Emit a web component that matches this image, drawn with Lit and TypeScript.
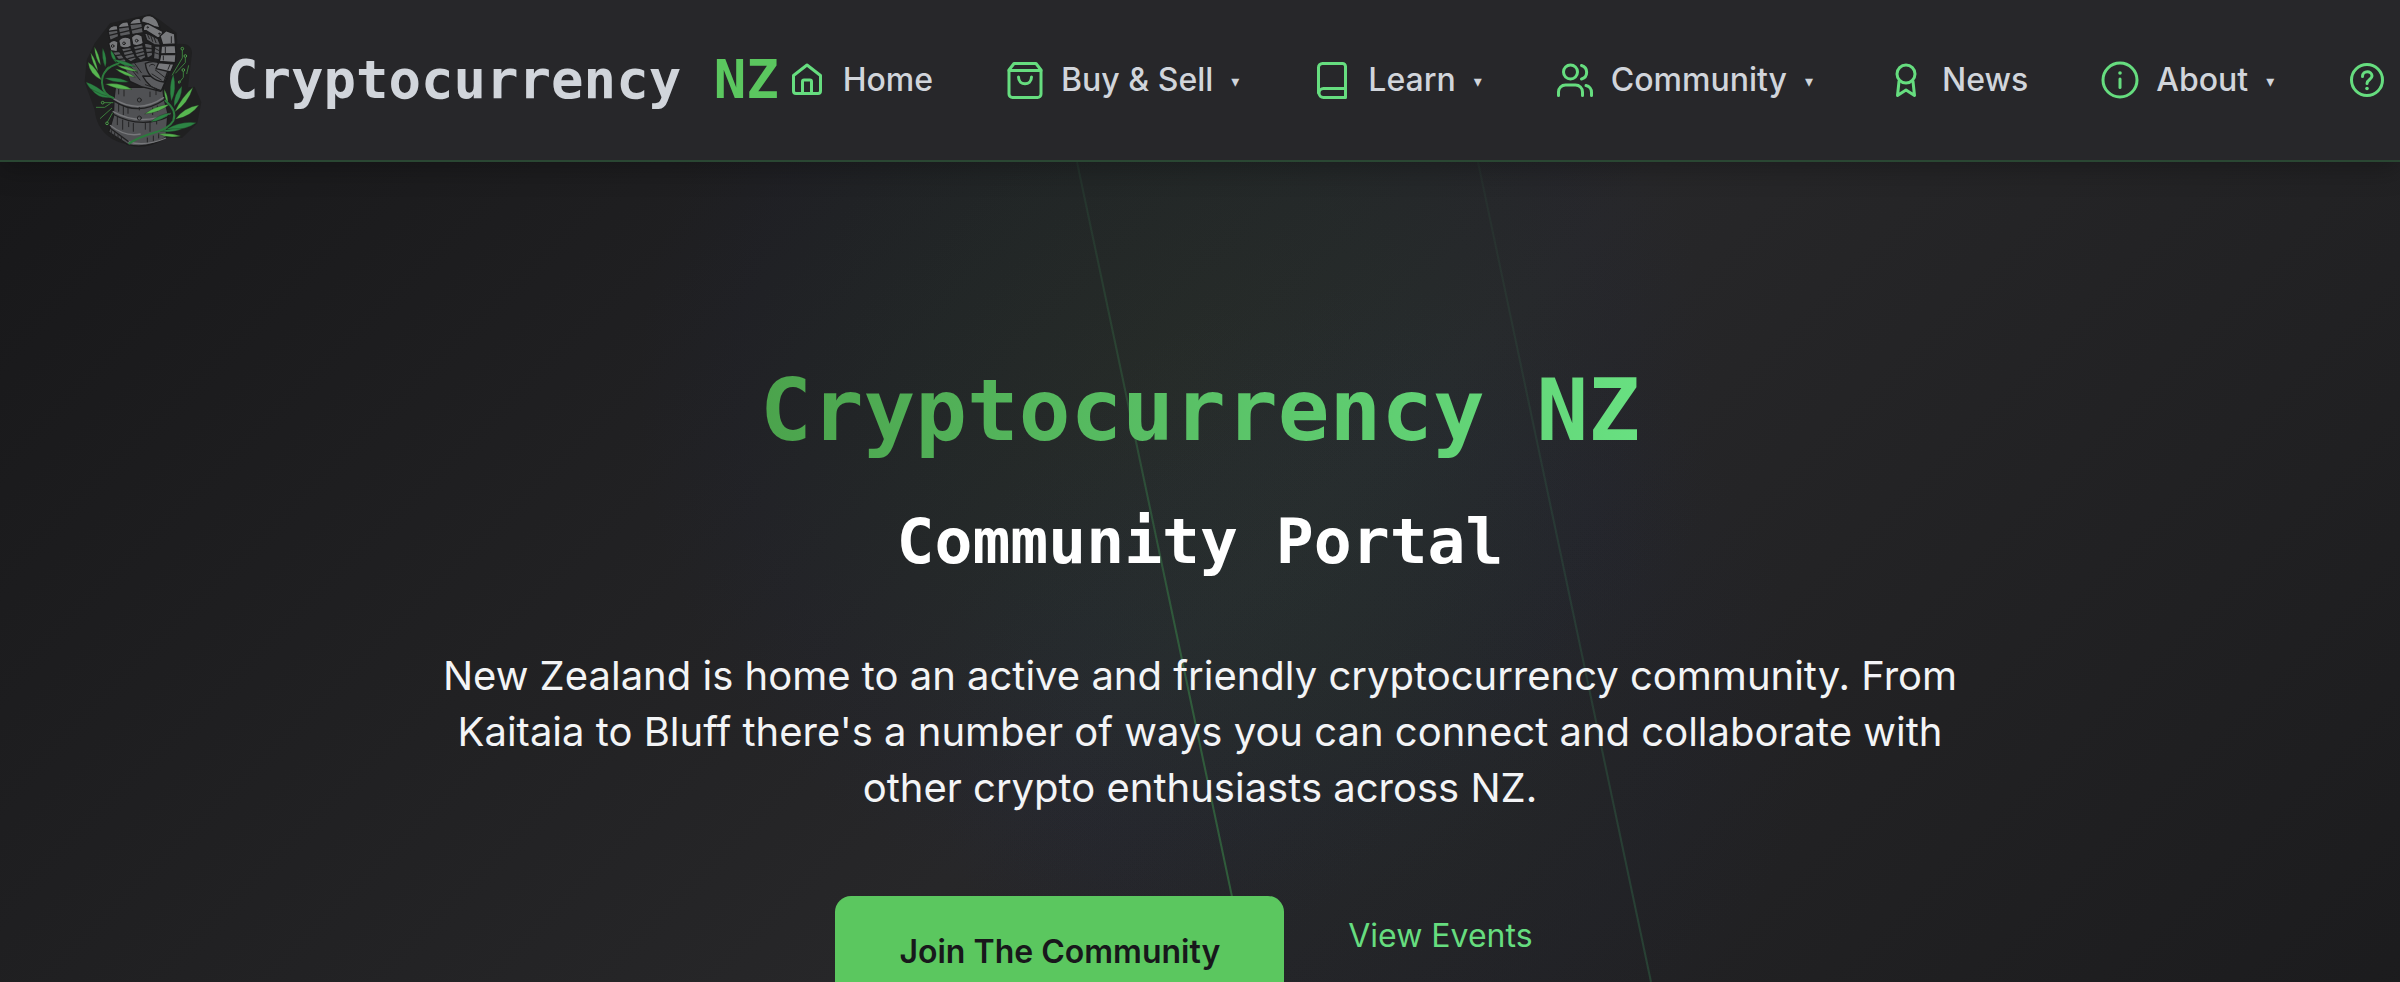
import { LitElement, html, css, svg, nothing } from "lit";
import { customElement, property } from "lit/decorators.js";

const ICONS: Record<string, unknown> = {
  home: svg`<path d="M20 5 6.500 15.500V31a2.500 2.500 0 0 0 2.500 2.500h22a2.500 2.500 0 0 0 2.500-2.500V15.500Z"/><path d="M15.500 33V21.500a1.500 1.500 0 0 1 1.500-1.500h6a1.500 1.500 0 0 1 1.500 1.500V33"/>`,
  bag: svg`<path d="M9 3.500h22l5 6.500v24a3.500 3.500 0 0 1-3.500 3.500h-25A3.500 3.500 0 0 1 4 34V10Z"/><path d="M4 10.500h32M13.500 17c0 9 13 9 13 0"/>`,
  book: svg`<path d="M6.500 33V7.500a4 4 0 0 1 4-4h20a3 3 0 0 1 3 3v31h-22a4.500 4.500 0 0 1 0-9h22"/>`,
  users: svg`<circle cx="15.500" cy="12" r="7"/><path d="M3.500 35.500V32a7 7 0 0 1 7-7h10a7 7 0 0 1 7 7v3.500M26.500 5.500a7 7 0 0 1 0 13.500M31 25.500a7 7 0 0 1 5.500 7v3"/>`,
  award: svg`<circle cx="20" cy="14" r="9"/><path d="M13 21.500 11.500 35.500 20 30l8.500 5.500L27 21.500"/>`,
  info: svg`<circle cx="20" cy="20" r="17"/><path d="M20 19v8.500"/><circle class="dot" cx="20" cy="13" r="1.800"/>`,
  help: svg`<circle cx="20" cy="20" r="15.500"/><path d="M15.500 16.500c0-6.500 9.500-6 9.500-.5 0 3.500-5 3.500-5 7.500"/><circle class="dot" cx="20" cy="28.500" r="1.800"/>`,
};

const leaves = (d: string[], cls: string) => d.map((p) => svg`<path class=${cls} d=${p} />`);

const BRIGHT = [
  "M92 158Q96 190 114 214Q110 182 92 158Z",
  "M84 186Q88 222 124 240Q112 206 84 186Z",
  "M103 140Q106 178 122 196Q119 164 103 140Z",
  "M170 196Q200 196 234 214Q196 214 170 196Z",
  "M166 206Q200 212 226 232Q190 228 166 206Z",
  "M136 252Q180 246 216 268Q176 272 136 252Z",
  "M399 262Q366 290 344 336Q384 312 399 262Z",
  "M417 315Q372 322 346 358Q392 350 417 315Z",
  "M254 342Q300 338 330 312Q284 318 254 342Z",
  "M294 402Q330 398 362 408Q326 416 294 402Z",
  "M312 268Q314 300 324 308Q324 284 312 268Z",
  "M148 198Q140 214 128 228Q134 208 148 198Z",
];
const DEEP = [
  "M128 144Q124 176 136 202Q144 174 128 144Z",
  "M152 150Q150 174 170 190Q168 166 152 150Z",
  "M78 246Q94 284 150 292Q112 256 78 246Z",
  "M94 268Q116 300 158 292Q124 286 94 268Z",
  "M160 178Q200 182 226 200Q186 200 160 178Z",
  "M134 234Q180 230 206 246Q160 250 134 234Z",
  "M340 222Q324 262 334 304Q352 270 340 222Z",
  "M366 258Q340 282 342 320Q366 296 366 258Z",
  "M409 368Q362 362 318 388Q372 394 409 368Z",
  "M272 366Q306 362 334 338Q296 342 272 366Z",
  "M300 394Q336 382 366 388Q334 400 300 394Z",
];

@customElement("fist-logo")
export class FistLogo extends LitElement {
  static styles = css`
    :host { display: block; flex: none; }
    svg { display: block; width: 128px; height: 140px; }
    .back { fill: #202021; }
    .plate { fill: #78797c; stroke: #1d1d1e; stroke-width: 4; stroke-linejoin: round; }
    .mid { fill: #5b5c5f; stroke: #1d1d1e; stroke-width: 4; stroke-linejoin: round; }
    .arm { fill: #505154; stroke: #1d1d1e; stroke-width: 4; stroke-linejoin: round; }
    .ink { fill: none; stroke: #1f1f20; stroke-width: 4; stroke-linecap: round; }
    .fine { fill: none; stroke: #242425; stroke-width: 3; stroke-linecap: round; }
    .rim { fill: none; stroke: #77787b; stroke-width: 4; }
    .bright { fill: #57b650; stroke: #1d2a1e; stroke-width: 1; }
    .deep { fill: #2c8444; stroke: #1d2a1e; stroke-width: 1; }
    .vine { fill: none; stroke: #2c7a3d; stroke-width: 6; stroke-linecap: round; }
    .wire { fill: none; stroke: #3c7d3d; stroke-width: 3; }
    .node { fill: #202021; stroke: #4a9a48; stroke-width: 3; }
  `;

  render() {
    return html`<svg viewBox="60 30 384 420" role="img" aria-label="Cryptocurrency NZ logo">
      <path class="back" d="M150 70 270 42 300 60 350 98 352 132Q396 128 396 160L384 262 404 260 424 306 412 370 366 414 318 414Q240 452 170 424Q110 396 104 330L74 246 80 180 104 130Z"/>
      <path class="arm" d="M166 262 308 262 312 296 324 340 318 412Q262 448 204 434L146 396 160 350 162 296Z"/>
      <path class="rim" d="M160 296Q236 344 312 292M158 334Q240 380 332 340M150 376Q196 412 242 402M206 426Q258 440 318 414"/>
      <path class="ink" d="M164 304Q236 350 312 300M158 342Q240 388 326 350M150 384 204 424"/>
      <path class="fine" d="M176 312v22M190 318v26M204 324v16M292 318v16M278 324v20M172 352v22M188 360v28M220 370v24M206 366v14M256 368v20M270 364v30M290 358v14M176 282v-14M192 288v-18M288 284v-16M270 290v-14M154 392v14M164 398v14M174 404v14M184 410v14M238 322v8M262 414v12M280 408v14M296 402v12"/>
      <circle class="fine" cx="238" cy="300" r="6"/><circle class="fine" cx="238" cy="354" r="6"/>
      <path class="arm" d="M190 194 260 180 330 194 322 232 302 274 244 260 210 244Z"/>
      <path class="mid" d="M248 228 322 230 304 272Q268 266 248 228Z"/>
      <path class="mid" d="M256 190Q290 174 326 206L312 246Q262 240 256 190Z"/>
      <path class="fine" d="M268 198q8-10 16-2M286 210l28 22M276 222l28 18M256 254l34 12M216 210l24 30M206 196l28 24M224 190l20 28"/>
      <path class="mid" d="M144 94 172 82 176 110 150 122ZM174 82 206 70 212 104 180 110ZM208 70 244 60 250 98 216 104Z"/>
      <path class="ink" d="M148 106 248 82"/>
      <path class="plate" d="M144 94Q146 76 172 76L174 90ZM174 84Q178 64 204 66L208 80ZM208 74Q214 54 240 54L244 70Z"/>
      <path class="plate" d="M244 66Q244 46 268 46Q292 50 300 84L282 80 260 70Z"/>
      <path class="plate" d="M146 130Q160 114 174 126L172 156 152 152ZM176 122Q190 104 212 116L214 138Q196 150 180 140ZM214 112Q228 94 246 108L250 130Q232 142 218 134Z"/>
      <path class="mid" d="M156 156 178 154 200 184 186 192ZM184 146 212 142 230 176 212 186 196 174ZM220 140 248 134 258 172 242 182 228 168ZM252 128 276 134 278 166 262 176Z"/>
      <path class="ink" d="M162 168 186 164M170 180 194 176M190 156 216 150M196 166 222 160M204 176 228 170M224 150 250 144M230 160 254 154M234 170 256 164M256 144 276 146M258 158 278 156"/>
      <path class="plate" d="M250 92Q248 70 266 72L308 94Q308 112 294 114L258 92Z"/>
      <path class="mid" d="M252 96 294 116 302 136 282 134 260 120Z"/>
      <path class="fine" d="M262 102l6 14M272 106l6 18M282 112l6 16"/>
      <path class="plate" d="M300 108 318 92 344 102 346 132 308 134Z"/>
      <path class="plate" d="M304 138 346 136 348 160 302 162ZM302 164 348 164 346 188 298 184ZM296 188 342 192 332 216 288 206Z"/>
      <path class="mid" d="M284 138 300 138 298 180 280 176Z"/>
      <path class="fine" d="M286 146l12 6M284 158l12 4M316 142v16M310 168v12M330 194l-6 14M334 110v18"/>
      <circle class="fine" cx="263" cy="82" r="2"/><circle class="fine" cx="298" cy="101" r="2"/>
      <circle class="fine" cx="158" cy="138" r="4"/><circle class="fine" cx="192" cy="130" r="4"/><circle class="fine" cx="230" cy="122" r="4"/>
      <path class="wire" d="M367 150V174L336 226M376 172V188L346 220M370 214V232L356 250M386 196 380 222M108 322H134L152 310M128 308H160M120 356 156 324M140 370 158 338"/>
      <circle class="node" cx="367" cy="146" r="4"/><circle class="node" cx="376" cy="168" r="4"/><circle class="node" cx="370" cy="210" r="4"/><circle class="node" cx="128" cy="308" r="4"/><circle class="node" cx="141" cy="370" r="4"/><circle class="node" cx="358" cy="246" r="3"/>
      ${leaves(DEEP, "deep")}${leaves(BRIGHT, "bright")}
      <path class="vine" d="M176 190Q124 206 126 248Q128 284 160 294M316 302Q352 330 340 362Q326 386 282 398Q234 412 208 430"/>
    </svg>`;
  }
}

@customElement("nav-item")
export class NavItem extends LitElement {
  @property() icon = "";
  @property() label = "";
  @property({ type: Boolean }) menu = false;

  static styles = css`
    :host { display: block; flex: none; }
    .item {
      display: flex; align-items: center; gap: 16px; height: 48px; padding: 0; border: 0; background: none;
      color: #d1d5db; font: 500 32px/48px Inter, sans-serif; text-decoration: none; white-space: nowrap; cursor: pointer;
    }
    .icon {
      display: block; width: 40px; height: 40px; fill: none; stroke: #66dd7f; stroke-width: 3;
      stroke-linecap: round; stroke-linejoin: round;
    }
    .dot { fill: #66dd7f; stroke: none; }
    .caret { font: 16px/44px "DejaVu Sans", sans-serif; padding: 4px 1px 0 2px; }
  `;

  render() {
    const body = html`<svg class="icon" viewBox="0 0 40 40" aria-hidden="true">${ICONS[this.icon]}</svg>
      ${this.label ? html`<span>${this.label}</span>` : nothing}
      ${this.menu ? html`<span class="caret" aria-hidden="true">▾</span>` : nothing}`;
    return this.menu
      ? html`<button class="item" type="button" aria-haspopup="true">${body}</button>`
      : html`<a class="item" href="#" aria-label=${this.label || "Help"}>${body}</a>`;
  }
}

@customElement("app-root")
export class AppRoot extends LitElement {
  static styles = css`
    :host {
      display: flex; flex-direction: column; height: 100vh; overflow: hidden;
      background: #1a1a1c; color: #f3f4f6; font-family: Inter, sans-serif;
    }
    .header {
      position: relative; z-index: 1; display: flex; align-items: center; flex: none; gap: 8px;
      padding: 10px 0 10px 80px; background: #27272a; border-bottom: 2px solid #2a4733;
      box-shadow: 0 8px 24px rgba(0, 0, 0, 0.25);
    }
    .brand {
      display: flex; align-items: center; gap: 18px; flex: none; color: #d1d5db; text-decoration: none;
      font: 700 54px/64px "DejaVu Sans Mono", monospace; white-space: nowrap;
    }
    .accent { color: #5bc75f; }
    .nav { display: flex; align-items: center; gap: 72px; flex: 1; min-width: 0; }
    .hero {
      position: relative; flex: 1; display: flex; flex-direction: column; align-items: center;
      padding: 200px 48px 80px; text-align: center;
      background:
        radial-gradient(circle at 49% 230px, rgba(76, 175, 80, 0.05) 0, rgba(40, 130, 100, 0.05) 240px, rgba(30, 50, 110, 0.04) 440px, transparent 540px),
        radial-gradient(circle at 57% 560px, rgba(40, 130, 100, 0.03) 0, rgba(30, 50, 110, 0.04) 300px, transparent 440px),
        linear-gradient(135deg, #18181a 0%, #272729 50%, #1b1b1d 100%);
    }
    .rays { position: absolute; inset: 0 0 auto; width: 100%; height: auto; }
    .title, .subtitle, .lead, .actions { position: relative; }
    .title {
      margin: 0; font: 700 86px/96px "DejaVu Sans Mono", monospace; color: transparent;
      background: linear-gradient(90deg, #4ba34c, #68e081); -webkit-background-clip: text; background-clip: text;
    }
    .subtitle { margin: 48px 0 0; font: 700 63px/72px "DejaVu Sans Mono", monospace; color: #fff; }
    .lead { margin: 70px 0 0; max-width: 1536px; font-size: 40px; line-height: 56px; }
    .actions { display: flex; align-items: flex-start; gap: 32px; margin-top: 80px; }
    .join {
      padding: 32px 64px; border: 0; border-radius: 16px; background: #5bc75f; color: #18181b;
      font: 600 32px/48px Inter, sans-serif; cursor: pointer;
    }
    .events { padding: 16px 32px; color: #66dd7f; font-size: 32px; line-height: 48px; text-decoration: none; }
  `;

  render() {
    return html`
      <header class="header">
        <a class="brand" href="#"><fist-logo></fist-logo><span>Cryptocurrency <span class="accent">NZ</span></span></a>
        <nav class="nav" aria-label="Main">
          <nav-item icon="home" label="Home"></nav-item>
          <nav-item icon="bag" label="Buy &amp; Sell" menu></nav-item>
          <nav-item icon="book" label="Learn" menu></nav-item>
          <nav-item icon="users" label="Community" menu></nav-item>
          <nav-item icon="award" label="News"></nav-item>
          <nav-item icon="info" label="About" menu></nav-item>
          <nav-item icon="help"></nav-item>
        </nav>
      </header>
      <main class="hero">
        <svg class="rays" viewBox="0 0 2400 820" aria-hidden="true">
          <defs>
            <linearGradient id="ray-a" gradientUnits="userSpaceOnUse" x1="0" y1="0" x2="0" y2="820">
              <stop offset="0" stop-color="#4ade80" stop-opacity="0.06"/><stop offset="0.600" stop-color="#4ade60" stop-opacity="0.27"/><stop offset="1" stop-color="#4ade60" stop-opacity="0.3"/>
            </linearGradient>
            <linearGradient id="ray-b" gradientUnits="userSpaceOnUse" x1="0" y1="0" x2="0" y2="820">
              <stop offset="0" stop-color="#4ade80" stop-opacity="0.04"/><stop offset="1" stop-color="#4ade80" stop-opacity="0.17"/>
            </linearGradient>
          </defs>
          <path d="M1077 0 1250 820" stroke="url(#ray-a)" stroke-width="2"/>
          <path d="M1478 0 1651 820" stroke="url(#ray-b)" stroke-width="2"/>
        </svg>
        <h1 class="title">Cryptocurrency NZ</h1>
        <h2 class="subtitle">Community Portal</h2>
        <p class="lead">New Zealand is home to an active and friendly cryptocurrency community. From Kaitaia to Bluff there's a number of ways you can connect and collaborate with other crypto enthusiasts across NZ.</p>
        <div class="actions">
          <button class="join" type="button">Join The Community</button>
          <a class="events" href="#">View Events</a>
        </div>
      </main>
    `;
  }
}
